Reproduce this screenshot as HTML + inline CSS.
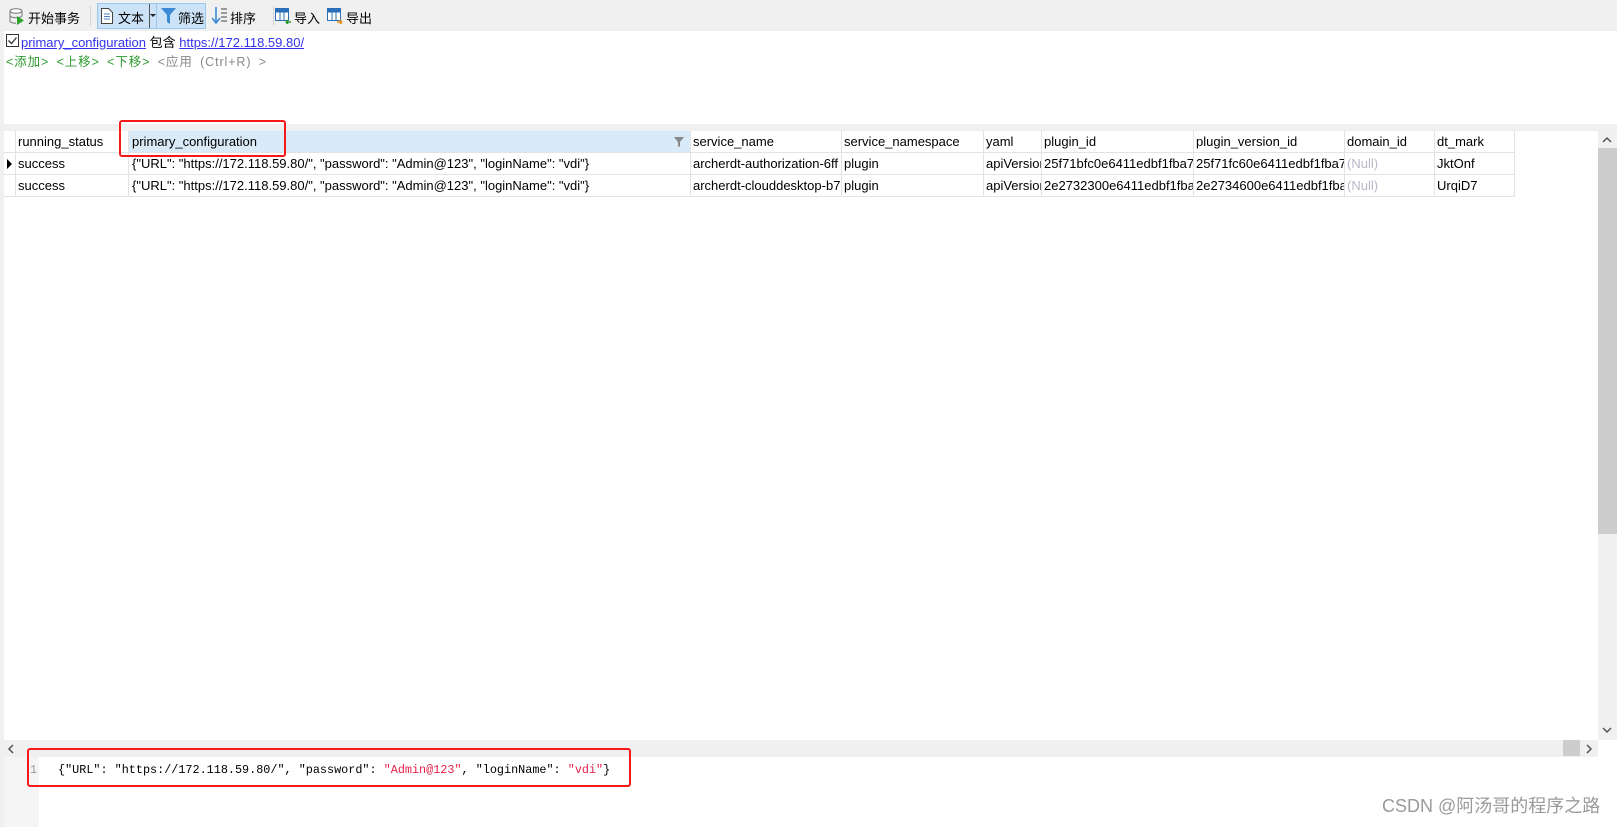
<!DOCTYPE html>
<html><head><meta charset="utf-8"><style>
*{margin:0;padding:0;box-sizing:border-box}
body{width:1617px;height:827px;background:#fff;font-family:"Liberation Sans","Noto Sans CJK SC",sans-serif;font-size:13px;color:#000;position:relative;overflow:hidden}
.a{position:absolute}
.tb{left:0;top:0;width:1617px;height:31px;background:#f0f0f0}
.tbt{top:8px;font-size:13px;white-space:nowrap}
.sep{top:6px;width:1px;height:20px;background:#d4d4d4}
.gr{color:#2e9a2e}
.cell{position:absolute;height:22px;line-height:22px;white-space:nowrap;overflow:hidden;padding-left:3px;border-right:1px solid #e3e3e3;border-bottom:1px solid #e3e3e3}
.null{color:#b8b8c8}
.red{border:2.5px solid #f5191a;border-radius:3px}
.mono{font-family:"Liberation Mono","DejaVu Sans Mono",monospace;font-size:11.8px}
</style></head><body>
<div class="a tb"></div>
<svg class="a" style="left:9px;top:8px" width="16" height="17"><ellipse cx="7" cy="3" rx="6" ry="2.3" fill="#fff" stroke="#777"/><path d="M1 3v10c0 1.3 2.7 2.3 6 2.3M13 3v5" fill="none" stroke="#777"/><path d="M1 7.5c0 1.3 2.7 2.3 6 2.3s6-1 6-2.3" fill="none" stroke="#777"/><path d="M8 8l7 4.5-7 4.5z" fill="#2da52d"/></svg>
<div class="a tbt" style="left:28px">开始事务</div>
<div class="a sep" style="left:90px"></div>
<div class="a" style="left:97px;top:3px;width:109px;height:26px;background:#cce3f7;border:1px solid #9cc8ee"></div>
<div class="a" style="left:149px;top:4px;width:1px;height:24px;background:#555"></div>
<div class="a" style="left:156px;top:4px;width:1px;height:24px;background:#9cc8ee"></div>
<svg class="a" style="left:101px;top:8px" width="12" height="16"><path d="M.5.5h7l4 4v11H.5z" fill="#fff" stroke="#444"/><path d="M3 6h6M3 8.5h6M3 11h6" stroke="#4a7fc0"/></svg>
<div class="a tbt" style="left:118px">文本</div>
<svg class="a" style="left:150px;top:14px" width="6" height="4"><path d="M0 0h6L3 3z" fill="#222"/></svg>
<svg class="a" style="left:161px;top:8px" width="15" height="16"><path d="M0 0h15L9 7v9L6 14V7z" fill="#3a8ad6"/></svg>
<div class="a tbt" style="left:178px">筛选</div>
<svg class="a" style="left:212px;top:7px" width="16" height="18"><path d="M4 0v15M0 11l4 5 4-5" fill="none" stroke="#3a8ad6" stroke-width="1.6"/><path d="M9 2h6M9 6h6M9 10h6M9 14h6" stroke="#444"/></svg>
<div class="a tbt" style="left:230px">排序</div>
<div class="a sep" style="left:273px"></div>
<svg class="a" style="left:275px;top:8px" width="17" height="16"><rect x=".5" y=".5" width="13" height="12" fill="#fff" stroke="#2a6fb8"/><path d="M.5 4h13M5 4v9M9 4v9" stroke="#2a6fb8"/><rect x=".5" y=".5" width="13" height="3" fill="#2a6fb8"/><path d="M16 14h-5M11 14l2-2M11 14l2 2" stroke="#2d9a2d" stroke-width="1.6" fill="none"/></svg>
<div class="a tbt" style="left:294px">导入</div>
<svg class="a" style="left:327px;top:8px" width="17" height="16"><rect x=".5" y=".5" width="13" height="12" fill="#fff" stroke="#2a6fb8"/><path d="M.5 4h13M5 4v9M9 4v9" stroke="#2a6fb8"/><rect x=".5" y=".5" width="13" height="3" fill="#2a6fb8"/><path d="M10 14h5M15 14l-2-2M15 14l-2 2" stroke="#e8901a" stroke-width="1.6" fill="none"/></svg>
<div class="a tbt" style="left:346px">导出</div>

<div class="a" style="left:0;top:31px;width:4px;height:796px;background:#f0f0f0"></div>
<svg class="a" style="left:6px;top:34px" width="13" height="13"><rect x=".5" y=".5" width="12" height="12" fill="#fff" stroke="#333"/><path d="M2.5 6.5l3 3 5-6" fill="none" stroke="#333" stroke-width="1.3"/></svg>
<div class="a" style="left:21px;top:32px;white-space:nowrap"><span style="color:#3333ee;text-decoration:underline">primary_configuration</span> 包含 <span style="color:#3333ee;text-decoration:underline">https://172.118.59.80/</span></div>
<div class="a" style="left:6px;top:51px;font-size:12.5px;letter-spacing:0.9px;word-spacing:3px;white-space:nowrap;color:#888"><span class="gr">&lt;添加&gt;</span> <span class="gr">&lt;上移&gt;</span> <span class="gr">&lt;下移&gt;</span> &lt;应用 (Ctrl+R) &gt;</div>
<div class="a" style="left:0;top:124px;width:1617px;height:7px;background:#f0f0f0"></div>

<div class="cell" style="left:4px;top:131px;width:12px"></div>
<div class="cell" style="left:15px;top:131px;width:114px">running_status</div>
<div class="cell" style="left:129px;top:131px;width:562px;background:#d9eaf8">primary_configuration<svg style="position:absolute;left:545px;top:6px" width="10" height="10"><path d="M0 0h10L6 5v5L4 9V5z" fill="#888"/></svg></div>
<div class="cell" style="left:690px;top:131px;width:152px">service_name</div>
<div class="cell" style="left:841px;top:131px;width:143px">service_namespace</div>
<div class="cell" style="left:983px;top:131px;width:59px">yaml</div>
<div class="cell" style="left:1041px;top:131px;width:153px">plugin_id</div>
<div class="cell" style="left:1193px;top:131px;width:152px">plugin_version_id</div>
<div class="cell" style="left:1344px;top:131px;width:91px">domain_id</div>
<div class="cell" style="left:1434px;top:131px;width:81px">dt_mark</div>

<div class="cell" style="left:4px;top:153px;width:12px"><svg style="position:absolute;left:3px;top:6px" width="6" height="10"><path d="M0 0l5 5-5 5z" fill="#000"/></svg></div>
<div class="cell" style="left:15px;top:153px;width:114px">success</div>
<div class="cell" style="left:129px;top:153px;width:562px">{"URL": "https://172.118.59.80/", "password": "Admin@123", "loginName": "vdi"}</div>
<div class="cell" style="left:690px;top:153px;width:152px">archerdt-authorization-6ff</div>
<div class="cell" style="left:841px;top:153px;width:143px">plugin</div>
<div class="cell" style="left:983px;top:153px;width:59px">apiVersion</div>
<div class="cell" style="left:1041px;top:153px;width:153px">25f71bfc0e6411edbf1fba7</div>
<div class="cell" style="left:1193px;top:153px;width:152px">25f71fc60e6411edbf1fba7</div>
<div class="cell null" style="left:1344px;top:153px;width:91px">(Null)</div>
<div class="cell" style="left:1434px;top:153px;width:81px">JktOnf</div>

<div class="cell" style="left:4px;top:175px;width:12px"></div>
<div class="cell" style="left:15px;top:175px;width:114px">success</div>
<div class="cell" style="left:129px;top:175px;width:562px">{"URL": "https://172.118.59.80/", "password": "Admin@123", "loginName": "vdi"}</div>
<div class="cell" style="left:690px;top:175px;width:152px">archerdt-clouddesktop-b7</div>
<div class="cell" style="left:841px;top:175px;width:143px">plugin</div>
<div class="cell" style="left:983px;top:175px;width:59px">apiVersion</div>
<div class="cell" style="left:1041px;top:175px;width:153px">2e2732300e6411edbf1fba</div>
<div class="cell" style="left:1193px;top:175px;width:152px">2e2734600e6411edbf1fba</div>
<div class="cell null" style="left:1344px;top:175px;width:91px">(Null)</div>
<div class="cell" style="left:1434px;top:175px;width:81px">UrqiD7</div>

<div class="a red" style="left:119px;top:120px;width:167px;height:37px"></div>

<div class="a" style="left:1598px;top:131px;width:19px;height:609px;background:#f0f0f0"></div>
<svg class="a" style="left:1602px;top:136px" width="10" height="7"><path d="M1 6l4-4 4 4" fill="none" stroke="#555" stroke-width="1.5"/></svg>
<div class="a" style="left:1598px;top:148px;width:19px;height:386px;background:#cdcdcd"></div>
<svg class="a" style="left:1602px;top:727px" width="10" height="7"><path d="M1 1l4 4 4-4" fill="none" stroke="#555" stroke-width="1.5"/></svg>
<div class="a" style="left:4px;top:740px;width:1594px;height:17px;background:#f0f0f0"></div>
<svg class="a" style="left:7px;top:744px" width="7" height="10"><path d="M6 1L2 5l4 4" fill="none" stroke="#555" stroke-width="1.5"/></svg>
<div class="a" style="left:1563px;top:740px;width:17px;height:16px;background:#cdcdcd"></div>
<svg class="a" style="left:1586px;top:744px" width="7" height="10"><path d="M1 1l4 4-4 4" fill="none" stroke="#555" stroke-width="1.5"/></svg>

<div class="a" style="left:4px;top:757px;width:35px;height:70px;background:#f5f5f5"></div>
<div class="a mono" style="left:30px;top:763px;color:#999">1</div>
<div class="a mono" style="left:58px;top:763px;white-space:pre">{"URL": "https://172.118.59.80/", "password": <span style="color:#e8224a">"Admin@123"</span>, "loginName": <span style="color:#e8224a">"vdi"</span>}</div>
<div class="a red" style="left:27px;top:748px;width:604px;height:39px"></div>

<div class="a" style="left:1382px;top:792px;font-size:18px;color:#9a9a9a;white-space:nowrap">CSDN @阿汤哥的程序之路</div>
</body></html>
